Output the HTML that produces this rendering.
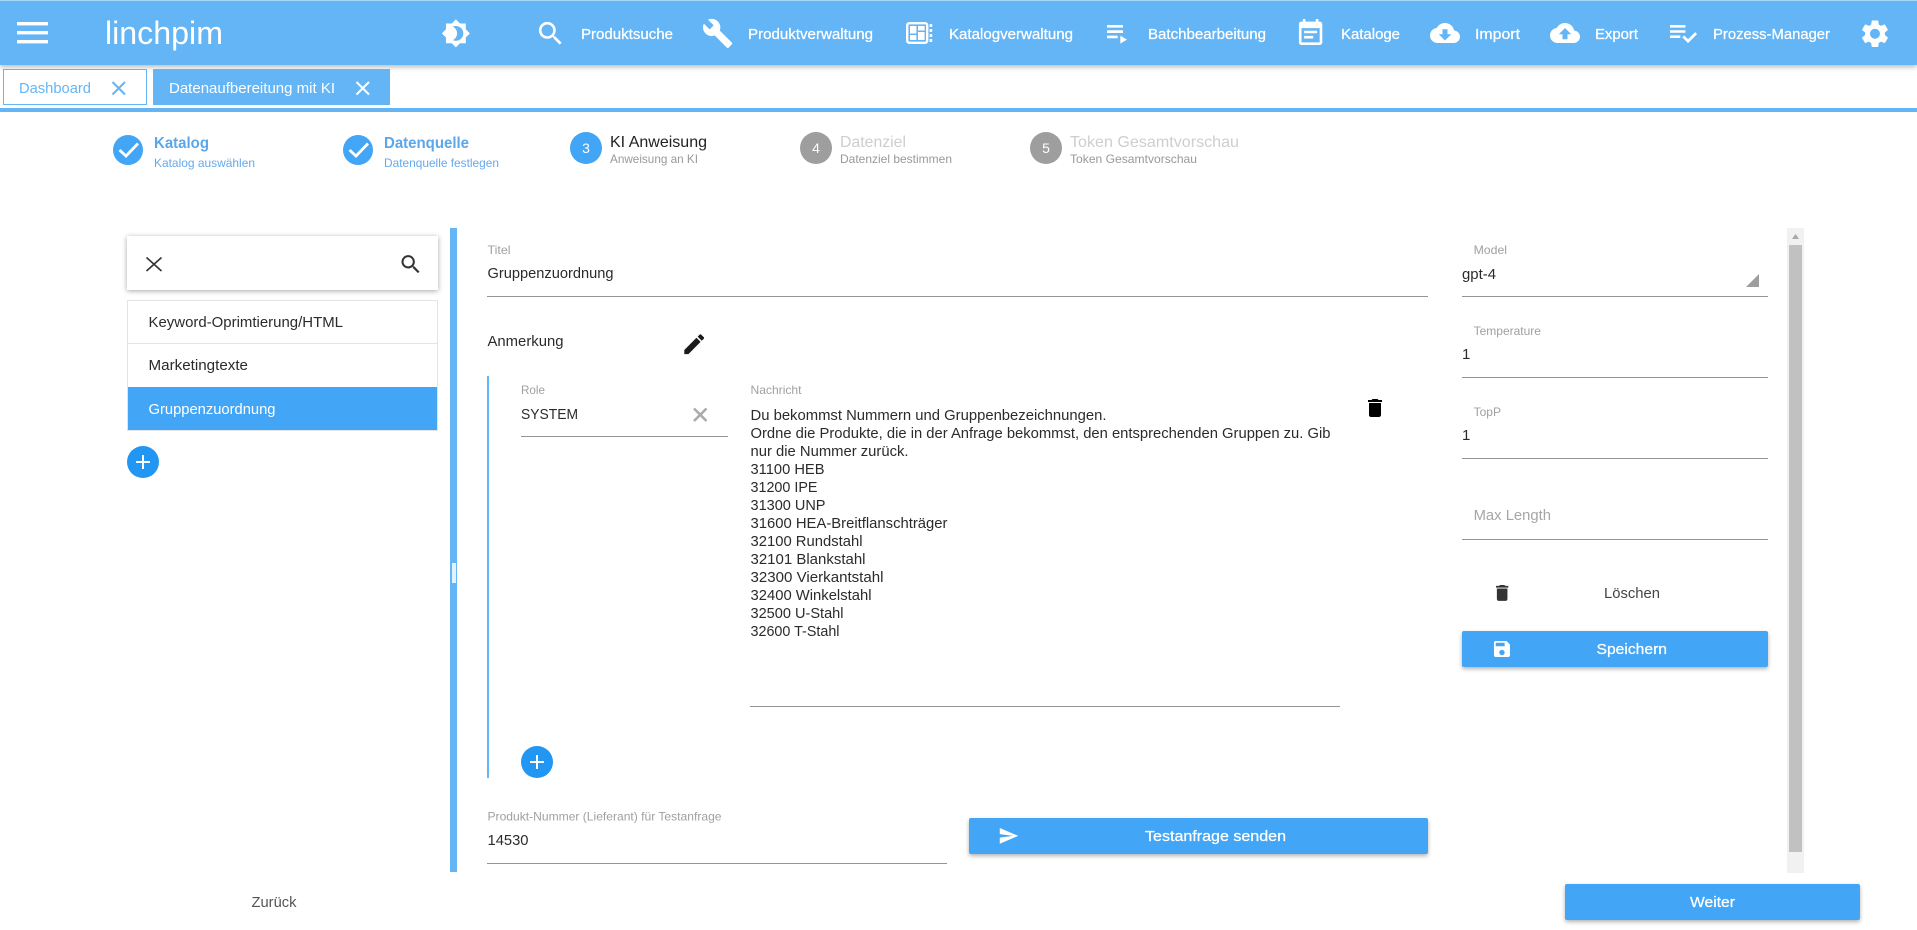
<!DOCTYPE html>
<html lang="de">
<head>
<meta charset="utf-8">
<title>linchpim</title>
<style>
html,body{margin:0;padding:0;width:1917px;height:930px;overflow:hidden;background:#fff;}
body{position:relative;font-family:"Liberation Sans",sans-serif;}
.b{position:absolute;box-sizing:border-box;}
svg{position:absolute;left:0;top:0;}
text{font-family:"Liberation Sans",sans-serif;}
.nav{fill:#fff;font-size:15px;stroke:#fff;stroke-width:.25px;}
.lab{fill:#a0a0a0;font-size:12px;}
.val{fill:#2b2b2b;font-size:15px;}
.msg{fill:#2b2b2b;font-size:15px;}
.w{fill:#fff;}
.ic{fill:#fff;}
</style>
</head>
<body>
<!-- header -->
<div class="b" style="left:0;top:0;width:1917px;height:65px;background:#64b5f6;border-top:1px solid #a8d6f8;box-shadow:0 2px 5px rgba(0,0,0,.28);"></div>
<!-- tabs -->
<div class="b" style="left:3px;top:69px;width:144px;height:36px;border:1px solid #64b5f6;background:#fff;"></div>
<div class="b" style="left:153px;top:69px;width:237px;height:36px;background:#64b5f6;"></div>
<div class="b" style="left:0;top:108px;width:1917px;height:4px;background:#64b5f6;"></div>
<!-- left search and list -->
<div class="b" style="left:127px;top:236px;width:311px;height:54px;background:#fff;box-shadow:0 1px 5px rgba(0,0,0,.35);"></div>
<div class="b" style="left:127px;top:300px;width:311px;height:131px;border:1px solid #e4e4e4;background:#fff;"></div>
<div class="b" style="left:128px;top:343px;width:309px;height:1px;background:#e4e4e4;"></div>
<div class="b" style="left:128px;top:387px;width:309px;height:43px;background:#42a5f5;"></div>
<!-- splitter -->
<div class="b" style="left:450px;top:228px;width:7px;height:644px;background:#64b5f6;"></div>
<div class="b" style="left:452px;top:563px;width:4px;height:20px;background:#e3f2fd;"></div>
<!-- message block bar -->
<div class="b" style="left:487px;top:376px;width:2px;height:402px;background:#64b5f6;"></div>
<!-- input lines -->
<div class="b" style="left:487px;top:296px;width:941px;height:1px;background:#949494;"></div>
<div class="b" style="left:521px;top:436px;width:207px;height:1px;background:#949494;"></div>
<div class="b" style="left:750px;top:706px;width:590px;height:1px;background:#949494;"></div>
<div class="b" style="left:487px;top:863px;width:460px;height:1px;background:#949494;"></div>
<div class="b" style="left:1462px;top:296px;width:306px;height:1px;background:#949494;"></div>
<div class="b" style="left:1462px;top:377px;width:306px;height:1px;background:#949494;"></div>
<div class="b" style="left:1462px;top:458px;width:306px;height:1px;background:#949494;"></div>
<div class="b" style="left:1462px;top:539px;width:306px;height:1px;background:#949494;"></div>
<!-- buttons -->
<div class="b" style="left:969px;top:818px;width:459px;height:36px;background:#42a5f5;border-radius:2px;box-shadow:0 2px 4px rgba(0,0,0,.3);"></div>
<div class="b" style="left:1462px;top:631px;width:306px;height:36px;background:#42a5f5;border-radius:2px;box-shadow:0 2px 4px rgba(0,0,0,.3);"></div>
<div class="b" style="left:1565px;top:884px;width:295px;height:36px;background:#42a5f5;border-radius:2px;box-shadow:0 2px 4px rgba(0,0,0,.3);"></div>
<!-- scrollbar -->
<div class="b" style="left:1787px;top:228px;width:17px;height:645px;background:#f1f1f1;"></div>
<div class="b" style="left:1789px;top:245px;width:13px;height:607px;background:#c1c1c1;"></div>

<svg width="1917" height="930" viewBox="0 0 1917 930" xmlns="http://www.w3.org/2000/svg">
<defs>
<path id="i-del" d="M6 19c0 1.1.9 2 2 2h8c1.1 0 2-.9 2-2V7H6v12zM19 4h-3.5l-1-1h-5l-1 1H5v2h14V4z"/>
<path id="i-search" d="M15.5 14h-.79l-.28-.27C15.41 12.59 16 11.11 16 9.5 16 5.91 13.09 3 9.5 3S3 5.91 3 9.5 5.91 16 9.5 16c1.61 0 3.09-.59 4.23-1.57l.27.28v.79l5 4.99L20.49 19l-4.99-5zm-6 0C7.01 14 5 11.99 5 9.5S7.01 5 9.5 5 14 7.01 14 9.5 11.99 14 9.5 14z"/>
</defs>

<!-- hamburger -->
<rect x="17" y="22" width="31" height="3.4" fill="#fff"/>
<rect x="17" y="31" width="31" height="3.4" fill="#fff"/>
<rect x="17" y="40" width="31" height="3.4" fill="#fff"/>
<text x="105" y="44" font-size="32" fill="#fff" textLength="118" lengthAdjust="spacingAndGlyphs">linchpim</text>

<!-- nav icons -->
<g class="ic">
<path transform="translate(441,18.5) scale(1.24)" fill-rule="evenodd" d="M20 8.69V4h-4.69L12 .69 8.69 4H4v4.69L.69 12 4 15.31V20h4.69L12 23.31 15.31 20H20v-4.69L23.31 12 20 8.69zM12 18c-.89 0-1.74-.2-2.5-.55C11.56 16.5 13 14.42 13 12s-1.44-4.5-3.5-5.45C10.26 6.2 11.11 6 12 6c3.31 0 6 2.69 6 6s-2.69 6-6 6z"/>
<use href="#i-search" transform="translate(535,18) scale(1.3)"/>
<path transform="translate(701.7,17.4) scale(1.33)" d="M22.7 19l-9.1-9.1c.9-2.3.4-5-1.5-6.9-2-2-5-2.4-7.4-1.3L9 6 6 9 1.6 4.7C.4 7.1.9 10.1 2.9 12.1c1.9 1.9 4.6 2.4 6.9 1.5l9.1 9.1c.4.4 1 .4 1.4 0l2.3-2.3c.5-.4.5-1.1.1-1.4z"/>
<rect x="907.2" y="23.2" width="20" height="19.6" rx="2.2" fill="none" stroke="#fff" stroke-width="2.4"/>
<rect x="910" y="26" width="6.4" height="7.5"/>
<rect x="918" y="26" width="6.6" height="4.5"/>
<rect x="918" y="32" width="6.6" height="8"/>
<rect x="910" y="35" width="6.4" height="5"/>
<rect x="929.6" y="24" width="2.6" height="3"/>
<rect x="929.6" y="29" width="2.6" height="3"/>
<rect x="929.6" y="34" width="2.6" height="3"/>
<rect x="929.6" y="39" width="2.6" height="3"/>
<path transform="translate(1101.7,17) scale(1.33)" d="M4 10h12v2H4zm0-4h12v2H4zm0 8h8v2H4zm10 0v6l5-3z"/>
<path transform="translate(1295,17.7) scale(1.3)" d="M17 10H7v2h10v-2zm2-7h-1V1h-2v2H8V1H6v2H5c-1.11 0-1.99.9-1.99 2L3 19c0 1.1.89 2 2 2h14c1.1 0 2-.9 2-2V5c0-1.1-.9-2-2-2zm0 16H5V8h14v11zm-5-5H7v2h7v-2z"/>
<path transform="translate(1430,18) scale(1.25)" d="M19.35 10.04C18.67 6.59 15.64 4 12 4 9.11 4 6.6 5.64 5.35 8.04 2.34 8.36 0 10.91 0 14c0 3.31 2.69 6 6 6h13c2.76 0 5-2.24 5-5 0-2.64-2.05-4.78-4.65-4.96zM17 13l-5 5-5-5h3V9h4v4h3z"/>
<path transform="translate(1550,18) scale(1.25)" d="M19.35 10.04C18.67 6.59 15.64 4 12 4 9.11 4 6.6 5.64 5.35 8.04 2.34 8.36 0 10.91 0 14c0 3.31 2.69 6 6 6h13c2.76 0 5-2.24 5-5 0-2.64-2.05-4.78-4.65-4.96zM14 13v4h-4v-4H7l5-5 5 5h-3z"/>
<path transform="translate(1667.4,17.3) scale(1.29)" d="M14 10H2v2h12v-2zm0-4H2v2h12V6zM2 16h8v-2H2v2zm19.5-4.5L23 13l-6.99 7-4.51-4.5L13 14l3.01 3 5.49-5.5z"/>
<path transform="translate(1858.4,17.2) scale(1.38)" d="M19.14 12.94c.04-.3.06-.61.06-.94 0-.32-.02-.64-.07-.94l2.03-1.58c.18-.14.23-.41.12-.61l-1.92-3.32c-.12-.22-.37-.29-.59-.22l-2.39.96c-.5-.38-1.03-.7-1.62-.94l-.36-2.54c-.04-.24-.24-.41-.48-.41h-3.84c-.24 0-.43.17-.47.41l-.36 2.54c-.59.24-1.13.57-1.62.94l-2.39-.96c-.22-.08-.47 0-.59.22L2.74 8.87c-.12.21-.08.47.12.61l2.03 1.58c-.05.3-.09.63-.09.94s.02.64.07.94l-2.03 1.58c-.18.14-.23.41-.12.61l1.92 3.32c.12.22.37.29.59.22l2.39-.96c.5.38 1.03.7 1.62.94l.36 2.54c.05.24.24.41.48.41h3.84c.24 0 .44-.17.47-.41l.36-2.54c.59-.24 1.13-.56 1.62-.94l2.39.96c.22.08.47 0 .59-.22l1.92-3.32c.12-.22.07-.47-.12-.61l-2.01-1.58zM12 15.6c-1.98 0-3.6-1.62-3.6-3.6s1.62-3.6 3.6-3.6 3.6 1.62 3.6 3.6-1.62 3.6-3.6 3.6z"/>
</g>

<!-- nav text -->
<text class="nav" x="581" y="39" textLength="92" lengthAdjust="spacingAndGlyphs">Produktsuche</text>
<text class="nav" x="748" y="39" textLength="125" lengthAdjust="spacingAndGlyphs">Produktverwaltung</text>
<text class="nav" x="949" y="39" textLength="124" lengthAdjust="spacingAndGlyphs">Katalogverwaltung</text>
<text class="nav" x="1148" y="39" textLength="118" lengthAdjust="spacingAndGlyphs">Batchbearbeitung</text>
<text class="nav" x="1341" y="39" textLength="59" lengthAdjust="spacingAndGlyphs">Kataloge</text>
<text class="nav" x="1475" y="39" textLength="45" lengthAdjust="spacingAndGlyphs">Import</text>
<text class="nav" x="1595" y="39" textLength="43" lengthAdjust="spacingAndGlyphs">Export</text>
<text class="nav" x="1713" y="39" textLength="117" lengthAdjust="spacingAndGlyphs">Prozess-Manager</text>

<!-- tabs -->
<text x="19" y="93" font-size="15" fill="#64b5f6" textLength="72" lengthAdjust="spacingAndGlyphs">Dashboard</text>
<path d="M112.5 82 L125 94.5 M125 82 L112.5 94.5" stroke="#64b5f6" stroke-width="2" fill="none"/>
<text x="169" y="93" font-size="15" fill="#fff" textLength="166" lengthAdjust="spacingAndGlyphs">Datenaufbereitung mit KI</text>
<path d="M356.5 82 L369 94.5 M369 82 L356.5 94.5" stroke="#fff" stroke-width="2" fill="none"/>

<!-- stepper -->
<circle cx="128" cy="150" r="15" fill="#42a5f5"/>
<path d="M119.5 150 L126 156 L138 143.5" fill="none" stroke="#fff" stroke-width="2.8"/>
<text x="154" y="148" font-size="16" font-weight="bold" fill="#5ba7ea" textLength="55" lengthAdjust="spacingAndGlyphs">Katalog</text>
<text x="154" y="167" font-size="12" fill="#64a9ec" textLength="101" lengthAdjust="spacingAndGlyphs">Katalog auswählen</text>

<circle cx="358" cy="150" r="15" fill="#42a5f5"/>
<path d="M349.5 150 L356 156 L368 143.5" fill="none" stroke="#fff" stroke-width="2.8"/>
<text x="384" y="148" font-size="16" font-weight="bold" fill="#5ba7ea" textLength="85" lengthAdjust="spacingAndGlyphs">Datenquelle</text>
<text x="384" y="167" font-size="12" fill="#64a9ec" textLength="115" lengthAdjust="spacingAndGlyphs">Datenquelle festlegen</text>

<circle cx="586" cy="148" r="16" fill="#42a5f5"/>
<text x="586" y="153" font-size="14" fill="#fff" text-anchor="middle">3</text>
<text x="610" y="147" font-size="16" fill="#222" textLength="97" lengthAdjust="spacingAndGlyphs">KI Anweisung</text>
<text x="610" y="163" font-size="12" fill="#999" textLength="88" lengthAdjust="spacingAndGlyphs">Anweisung an KI</text>

<circle cx="816" cy="148" r="16" fill="#9e9e9e"/>
<text x="816" y="153" font-size="14" fill="#fff" text-anchor="middle">4</text>
<text x="840" y="147" font-size="16" fill="#cecece" textLength="66" lengthAdjust="spacingAndGlyphs">Datenziel</text>
<text x="840" y="163" font-size="12" fill="#999" textLength="112" lengthAdjust="spacingAndGlyphs">Datenziel bestimmen</text>

<circle cx="1046" cy="148" r="16" fill="#9e9e9e"/>
<text x="1046" y="153" font-size="14" fill="#fff" text-anchor="middle">5</text>
<text x="1070" y="147" font-size="16" fill="#cecece" textLength="169" lengthAdjust="spacingAndGlyphs">Token Gesamtvorschau</text>
<text x="1070" y="163" font-size="12" fill="#999" textLength="127" lengthAdjust="spacingAndGlyphs">Token Gesamtvorschau</text>

<!-- search box -->
<path d="M146.5 257.5 L161.5 271 M161.5 257.5 L146.5 271" stroke="#333" stroke-width="1.6" fill="none"/>
<use href="#i-search" transform="translate(398.4,252) scale(1.03)" fill="#333"/>

<!-- list -->
<text class="val" x="148.5" y="327" textLength="194.5" lengthAdjust="spacingAndGlyphs">Keyword-Oprimtierung/HTML</text>
<text class="val" x="148.5" y="370" textLength="99.5" lengthAdjust="spacingAndGlyphs">Marketingtexte</text>
<text class="w" font-size="15" x="148.5" y="414" textLength="127" lengthAdjust="spacingAndGlyphs">Gruppenzuordnung</text>

<circle cx="143" cy="462" r="16" fill="#2196f3"/>
<path d="M136 462 H150 M143 455 V469" stroke="#fff" stroke-width="2" fill="none"/>

<!-- center form -->
<text class="lab" x="487.5" y="254" textLength="23" lengthAdjust="spacingAndGlyphs">Titel</text>
<text class="val" x="487.5" y="278" textLength="126" lengthAdjust="spacingAndGlyphs">Gruppenzuordnung</text>
<text class="val" x="487.5" y="346" textLength="76" lengthAdjust="spacingAndGlyphs">Anmerkung</text>
<path transform="translate(681,331) scale(1.1)" fill="#1a1a1a" d="M3 17.25V21h3.75L17.81 9.94l-3.75-3.75L3 17.25zM20.71 7.04c.39-.39.39-1.02 0-1.41l-2.34-2.34c-.39-.39-1.02-.39-1.41 0l-1.83 1.83 3.75 3.75 1.83-1.83z"/>

<text class="lab" x="521" y="394" textLength="24" lengthAdjust="spacingAndGlyphs">Role</text>
<text class="val" x="521" y="419" textLength="57" lengthAdjust="spacingAndGlyphs">SYSTEM</text>
<path d="M694 408.5 L706.5 421 M706.5 408.5 L694 421" stroke="#aaa" stroke-width="2.6" fill="none"/>

<text class="lab" x="750.5" y="394" textLength="51" lengthAdjust="spacingAndGlyphs">Nachricht</text>
<text class="msg" x="750.5" y="420" textLength="356" lengthAdjust="spacingAndGlyphs">Du bekommst Nummern und Gruppenbezeichnungen.</text>
<text class="msg" x="750.5" y="438" textLength="580" lengthAdjust="spacingAndGlyphs">Ordne die Produkte, die in der Anfrage bekommst, den entsprechenden Gruppen zu. Gib</text>
<text class="msg" x="750.5" y="456" textLength="158" lengthAdjust="spacingAndGlyphs">nur die Nummer zurück.</text>
<text class="msg" x="750.5" y="474" textLength="74" lengthAdjust="spacingAndGlyphs">31100 HEB</text>
<text class="msg" x="750.5" y="492" textLength="67" lengthAdjust="spacingAndGlyphs">31200 IPE</text>
<text class="msg" x="750.5" y="510" textLength="75" lengthAdjust="spacingAndGlyphs">31300 UNP</text>
<text class="msg" x="750.5" y="528" textLength="197" lengthAdjust="spacingAndGlyphs">31600 HEA-Breitflanschträger</text>
<text class="msg" x="750.5" y="546" textLength="112" lengthAdjust="spacingAndGlyphs">32100 Rundstahl</text>
<text class="msg" x="750.5" y="564" textLength="115" lengthAdjust="spacingAndGlyphs">32101 Blankstahl</text>
<text class="msg" x="750.5" y="582" textLength="133" lengthAdjust="spacingAndGlyphs">32300 Vierkantstahl</text>
<text class="msg" x="750.5" y="600" textLength="121" lengthAdjust="spacingAndGlyphs">32400 Winkelstahl</text>
<text class="msg" x="750.5" y="618" textLength="93" lengthAdjust="spacingAndGlyphs">32500 U-Stahl</text>
<text class="msg" x="750.5" y="636" textLength="89" lengthAdjust="spacingAndGlyphs">32600 T-Stahl</text>

<use href="#i-del" transform="translate(1363,396)" fill="#000"/>

<circle cx="537" cy="762" r="16" fill="#2196f3"/>
<path d="M530 762 H544 M537 755 V769" stroke="#fff" stroke-width="2" fill="none"/>

<text class="lab" x="487.5" y="820.5" textLength="234" lengthAdjust="spacingAndGlyphs">Produkt-Nummer (Lieferant) für Testanfrage</text>
<text class="val" x="487.5" y="845" textLength="41" lengthAdjust="spacingAndGlyphs">14530</text>

<path transform="translate(998,825.3) scale(.88)" fill="#fff" d="M2.01 21L23 12 2.01 3 2 10l15 2-15 2z"/>
<text x="1145" y="841" font-size="15" fill="#fff" stroke="#fff" stroke-width=".25" textLength="141" lengthAdjust="spacingAndGlyphs">Testanfrage senden</text>

<text x="251.5" y="907" font-size="15" fill="#555" textLength="45" lengthAdjust="spacingAndGlyphs">Zurück</text>
<text x="1690" y="907" font-size="15" fill="#fff" stroke="#fff" stroke-width=".25" textLength="45" lengthAdjust="spacingAndGlyphs">Weiter</text>

<!-- right panel -->
<text class="lab" x="1473.6" y="254" textLength="33.4" lengthAdjust="spacingAndGlyphs">Model</text>
<text class="val" x="1462" y="279" textLength="34" lengthAdjust="spacingAndGlyphs">gpt-4</text>
<path d="M1746 287 L1759 274 V287 Z" fill="#9e9e9e"/>
<text class="lab" x="1473.6" y="335" textLength="67.4" lengthAdjust="spacingAndGlyphs">Temperature</text>
<text class="val" x="1462" y="359">1</text>
<text class="lab" x="1473.6" y="416" textLength="27.4" lengthAdjust="spacingAndGlyphs">TopP</text>
<text class="val" x="1462" y="440">1</text>
<text x="1473.6" y="520" font-size="15" fill="#a6a6a6" textLength="77.4" lengthAdjust="spacingAndGlyphs">Max Length</text>
<use href="#i-del" transform="translate(1491.6,582.4) scale(.88)" fill="#333"/>
<text x="1604" y="598" font-size="15" fill="#444" textLength="56" lengthAdjust="spacingAndGlyphs">Löschen</text>
<path transform="translate(1491.3,638.3) scale(.89)" fill="#fff" d="M17 3H5c-1.11 0-2 .9-2 2v14c0 1.1.89 2 2 2h14c1.1 0 2-.9 2-2V7l-4-4zm-5 16c-1.66 0-3-1.34-3-3s1.34-3 3-3 3 1.34 3 3-1.34 3-3 3zm3-10H5V5h10v4z"/>
<text x="1596.5" y="654" font-size="15" fill="#fff" stroke="#fff" stroke-width=".25" textLength="70.5" lengthAdjust="spacingAndGlyphs">Speichern</text>

<!-- scrollbar arrow -->
<path d="M1795.5 234 L1799 239 H1792 Z" fill="#a8a8a8"/>
</svg>
</body>
</html>
